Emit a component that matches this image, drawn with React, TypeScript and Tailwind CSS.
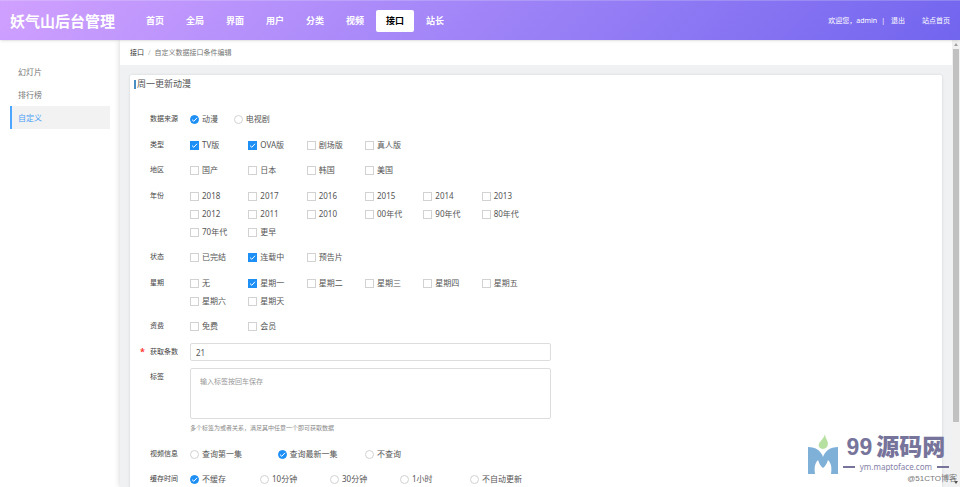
import { useState } from 'react';
import clsx from 'clsx';

const NAV = ['首页', '全局', '界面', '用户', '分类', '视频', '接口', '站长'];
const SIDE = ['幻灯片', '排行榜', '自定义'];

const TYPES = ['TV版', 'OVA版', '剧场版', '真人版'];
const REGIONS = ['国产', '日本', '韩国', '美国'];
const YEARS = [
  '2018', '2017', '2016', '2015', '2014', '2013',
  '2012', '2011', '2010', '00年代', '90年代', '80年代',
  '70年代', '更早',
];
const STATES = ['已完结', '连载中', '预告片'];
const WEEKDAYS = ['无', '星期一', '星期二', '星期三', '星期四', '星期五', '星期六', '星期天'];
const FEES = ['免费', '会员'];

interface OptionProps {
  type: 'radio' | 'checkbox';
  name: string;
  label: string;
  defaultChecked?: boolean;
}

function Option({ type, name, label, defaultChecked }: OptionProps) {
  return (
    <label className="flex h-[18px] items-center gap-[3px] whitespace-nowrap text-[8px] leading-[18px] text-[#555]">
      <span className="grid size-[9px] shrink-0">
        <input
          type={type}
          name={name}
          defaultChecked={defaultChecked}
          className={clsx(
            'peer col-start-1 row-start-1 size-[9px] appearance-none border border-[#d2d2d2] bg-white checked:border-[#1e90f5] checked:bg-[#1e90f5]',
            type === 'radio' && 'rounded-full',
          )}
        />
        <svg
          viewBox="0 0 9 9"
          className="pointer-events-none invisible col-start-1 row-start-1 size-[9px] peer-checked:visible"
          fill="none"
          stroke="#fff"
          strokeWidth="1"
        >
          <path d="M2 4.6 3.8 6.3 7 2.8" />
        </svg>
      </span>
      {label}
    </label>
  );
}

interface OptionsProps {
  type: 'radio' | 'checkbox';
  name: string;
  items: string[];
  checked?: string[];
  cols?: string;
}

function Options({ type, name, items, checked = [], cols = 'grid-cols-6' }: OptionsProps) {
  return (
    <div className={clsx('grid w-full max-w-[350px]', cols)}>
      {items.map((item) => (
        <Option key={item} type={type} name={name} label={item} defaultChecked={checked.includes(item)} />
      ))}
    </div>
  );
}

interface RowProps {
  label: string;
  htmlFor?: string;
  required?: boolean;
  tight?: boolean;
  children: React.ReactNode;
}

function Row({ label, htmlFor, required, tight, children }: RowProps) {
  const text = 'w-10 shrink-0 text-[7px] leading-[18px] text-[#444]';
  return (
    <div
      role="group"
      aria-label={label}
      className={clsx('flex', tight ? 'mb-[7px]' : 'mb-2')}
    >
      <span className="w-[10px] shrink-0 text-[9px] leading-[18px] font-bold text-[#f33]">{required && '*'}</span>
      {htmlFor ? <label htmlFor={htmlFor} className={text}>{label}</label> : <span className={text}>{label}</span>}
      <div className="min-w-0 flex-1">{children}</div>
    </div>
  );
}

function Watermark() {
  return (
    <div className="pointer-events-none absolute right-[3px] bottom-[3px] z-20 flex flex-col items-end">
      <div className="flex items-end gap-[5px] pr-2">
        <svg viewBox="0 0 30 40" className="h-10 w-[30px]">
          <path d="M0 13C8 13 13 17 15 23C17 17 22 13 30 13V40H23C24 33 23 29 20 26Q18 32 15 34Q12 32 10 26C7 29 6 33 7 40H0Z" fill="#7fb0d8" />
          <path d="M17 0C17 5 22 8 19 13Q15 17 11 13C9 8 16 6 17 0Z" fill="#b5e0a0" />
        </svg>
        <div className="flex flex-col">
          <span className="flex justify-center gap-1 font-['Liberation_Sans','Noto_Sans_CJK_SC',sans-serif] text-[23px] leading-[25px] font-black whitespace-nowrap text-[#77749b]">
            <span>99</span>
            <span>源码网</span>
          </span>
          <span className="flex items-center justify-between gap-[5px] text-[8px] leading-[14px] text-[#8482a6]">
            <i className="h-[2px] w-3 bg-[#77749b]" />
            ym.maptoface.com
            <i className="h-[2px] w-3 bg-[#77749b]" />
          </span>
        </div>
      </div>
      <span className="font-['Liberation_Sans','Noto_Sans_CJK_SC',sans-serif] text-[8px] leading-[10px] text-[#777]">
        @51CTO博客
      </span>
    </div>
  );
}

export default function App() {
  const [nav, setNav] = useState('接口');
  const [side, setSide] = useState('自定义');

  return (
    <div className="relative flex h-screen flex-col overflow-hidden bg-white font-['Noto_Sans','Noto_Sans_CJK_SC',sans-serif] text-[#555]">
      <header className="z-10 flex h-10 shrink-0 items-center border-t border-white/20 bg-linear-135 from-[#d0a0ff] to-[#7265ee] px-[10px] text-white shadow-sm">
        <h1 className="w-[126px] shrink-0 text-[15px] leading-5 font-bold">妖气山后台管理</h1>
        <nav className="flex gap-[2px]">
          {NAV.map((item) => (
            <a
              key={item}
              href="#"
              onClick={() => setNav(item)}
              className={clsx(
                'rounded-[2px] px-[10px] text-[9px] leading-[22px] font-bold whitespace-nowrap',
                item === nav && 'bg-white text-black',
              )}
            >
              {item}
            </a>
          ))}
        </nav>
        <div className="ml-auto flex text-[7px] leading-[18px] whitespace-nowrap">
          <span className="pr-1">欢迎您，admin</span>
          <span className="pr-[6px]">|</span>
          <a href="#" className="pr-[17px]">退出</a>
          <a href="#">站点首页</a>
        </div>
      </header>

      <div className="flex min-h-0 flex-1">
        <aside className="w-[120px] shrink-0 bg-white px-[10px] pt-5">
          {SIDE.map((item) => (
            <a
              key={item}
              href="#"
              onClick={() => setSide(item)}
              className={clsx(
                'block border-l-2 pl-[6px] text-[8px] leading-[23px]',
                item === side ? 'border-[#4da6ff] bg-[#f2f2f2] text-[#4a9ff5]' : 'border-transparent text-[#777]',
              )}
            >
              {item}
            </a>
          ))}
        </aside>

        <main className="z-[1] flex min-w-0 flex-1 flex-col overflow-hidden bg-[#f0f1f3] shadow-[0_0_6px_rgba(0,0,0,0.18)]">
          <div className="flex h-[25px] shrink-0 items-center gap-1 bg-white px-[10px] text-[7px] leading-[18px]">
            <a href="#" className="text-[#333]">接口</a>
            <span className="text-[#bbb]">/</span>
            <span className="text-[#777]">自定义数据接口条件编辑</span>
          </div>

          <section className="mx-[10px] mt-[10px] flex-1 rounded-[2px] bg-white shadow-[0_0_3px_rgba(0,0,0,0.12)]">
            <h2 className="flex items-center gap-[1px] pl-1 text-[9px] leading-[18px] text-[#555]">
              <i className="h-[9px] w-[2px] bg-[#4a8fc4]" />
              周一更新动漫
            </h2>

            <form className="pt-[17px] pl-[10px]">
              <Row label="数据来源">
                <Options type="radio" name="source" items={['动漫', '电视剧']} checked={['动漫']} cols="grid-cols-8" />
              </Row>
              <Row label="类型" tight>
                <Options type="checkbox" name="type" items={TYPES} checked={['TV版', 'OVA版']} />
              </Row>
              <Row label="地区">
                <Options type="checkbox" name="region" items={REGIONS} />
              </Row>
              <Row label="年份" tight>
                <Options type="checkbox" name="year" items={YEARS} />
              </Row>
              <Row label="状态">
                <Options type="checkbox" name="state" items={STATES} checked={['连载中']} />
              </Row>
              <Row label="星期" tight>
                <Options type="checkbox" name="weekday" items={WEEKDAYS} checked={['星期一']} />
              </Row>
              <Row label="资费">
                <Options type="checkbox" name="fee" items={FEES} />
              </Row>
              <Row label="获取条数" htmlFor="limit" required tight>
                <input
                  id="limit"
                  type="text"
                  defaultValue="21"
                  className="block h-[18px] w-full max-w-[361px] rounded-[2px] border border-[#ddd] px-[5px] text-[8px] text-[#555] outline-none"
                />
              </Row>
              <Row label="标签" htmlFor="tags">
                <textarea
                  id="tags"
                  placeholder="输入标签按回车保存"
                  className="block h-[51px] w-full max-w-[361px] resize-none rounded-[2px] border border-[#ddd] px-[9px] py-1 text-[7px] leading-[18px] outline-none placeholder:text-[#999]"
                />
                <p className="text-[6px] leading-[18px] text-[#888]">多个标签为或者关系，满足其中任意一个即可获取数据</p>
              </Row>
              <Row label="视频信息" tight>
                <Options
                  type="radio"
                  name="video"
                  items={['查询第一集', '查询最新一集', '不查询']}
                  checked={['查询最新一集']}
                  cols="grid-cols-4"
                />
              </Row>
              <Row label="缓存时间">
                <Options
                  type="radio"
                  name="cache"
                  items={['不缓存', '10分钟', '30分钟', '1小时', '不自动更新']}
                  checked={['不缓存']}
                  cols="grid-cols-5"
                />
              </Row>
            </form>
          </section>
        </main>

        {/* scroll track */}
        <div className="z-[2] flex w-2 shrink-0 flex-col items-center bg-[#f1f1f1]">
          <svg viewBox="0 0 8 9" className="h-[9px] w-2 shrink-0" fill="#a0a0a0">
            <path d="M4 3 6 6H2Z" />
          </svg>
          <div className="h-5/6 w-[6px] bg-[#c1c1c1]" />
          <svg viewBox="0 0 8 9" className="mt-auto h-[9px] w-2 shrink-0" fill="#505050">
            <path d="M4 6 6 3H2Z" />
          </svg>
        </div>
      </div>

      <Watermark />
    </div>
  );
}
